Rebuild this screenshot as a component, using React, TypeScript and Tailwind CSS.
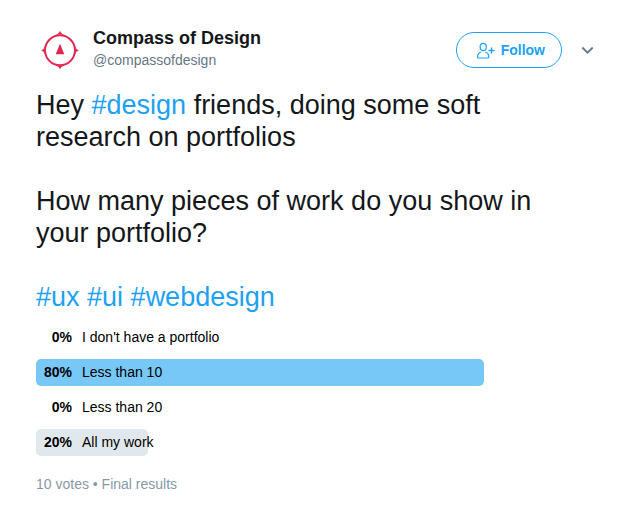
import { ReactNode } from "react";

type Option = {
  label: string;
  percent: number;
  winner?: boolean;
};

const options: Option[] = [
  { label: "I don't have a portfolio", percent: 0 },
  { label: "Less than 10", percent: 80, winner: true },
  { label: "Less than 20", percent: 0 },
  { label: "All my work", percent: 20 }
];

function Hashtag({ children }: { children: ReactNode }) {
  return (
    <a href="#" className="text-[#1da1f2]">
      {children}
    </a>
  );
}

function Avatar() {
  return (
    <svg viewBox="0 0 48 48" className="size-12 shrink-0" aria-hidden="true">
      <circle cx="24" cy="24.3" r="15" fill="none" stroke="#e2264d" strokeWidth="2" />
      <g fill="#e2264d">
        <path d="M24 4.600 Q24.800 8.200 30 9.800 A15 15 0 0 0 18 9.800 Q23.200 8.200 24 4.600Z" />
        <path d="M24 43.300 Q24.800 40.600 28 39.400 A15 15 0 0 1 20 39.400 Q23.200 40.600 24 43.300Z" />
        <path d="M5.300 24.300 Q8 23.500 9 20.300 A15 15 0 0 0 9 28.300 Q8 25.100 5.300 24.300Z" />
        <path d="M42.700 24.300 Q40 23.500 39 20.300 A15 15 0 0 1 39 28.300 Q40 25.100 42.700 24.300Z" />
        <path d="M24 17.800 L28.300 28.200 L19.700 28.200Z" />
      </g>
    </svg>
  );
}

function FollowIcon() {
  return (
    <svg
      viewBox="0 0 19 18"
      className="h-[18px] w-[19px]"
      fill="none"
      stroke="currentColor"
      strokeWidth="1.2"
      aria-hidden="true"
    >
      <path d="M6.200 2.300c-2.100 0-3.100 1.300-3.100 3.200 0 2.300 1.100 4.100 3.100 4.100s3.100-1.800 3.100-4.100c0-1.900-1-3.200-3.100-3.200Z" />
      <path d="M4.200 11C1.700 11.500.600 13.300.600 16.100c0 .6.300.9.900.9h9.400c.6 0 .9-.3.900-.9 0-2.800-1.100-4.600-3.600-5.100" />
      <path d="M14.500 6.500v6M11.500 9.500h6" strokeWidth="1.400" />
    </svg>
  );
}

function PollRow({ option }: { option: Option }) {
  return (
    <li className="relative flex h-[27px] items-center pb-[2px] text-sm text-black">
      <span
        className={`absolute inset-y-0 left-0 rounded-[5px] ${
          option.winner ? "bg-[#77c7f7]" : "bg-[#e1e8ed]"
        }`}
        style={{ width: `${option.percent}%` }}
      />
      <b className="relative w-9 text-right">{option.percent}%</b>
      <span className="relative ml-[10px]">{option.label}</span>
    </li>
  );
}

export default function App() {
  return (
    <main className="min-h-screen bg-white px-9 pt-[26px] pb-4 font-['Liberation_Sans',Arial,sans-serif]">
      <article>
        <header className="flex items-start justify-between">
          <a href="#" className="flex items-center gap-[9px]">
            <Avatar />
            <span className="flex flex-col pb-1">
              <b className="text-lg leading-6 text-[#14171a]">Compass of Design</b>
              <span className="text-sm text-[#657786]">@compassofdesign</span>
            </span>
          </a>
          <div className="flex items-center gap-[19px] pt-[6px] pr-[3px]">
            <button
              type="button"
              className="flex h-9 items-center gap-[5px] rounded-full border border-[#1da1f2] pr-4 pl-5 text-sm font-bold text-[#1da1f2]"
            >
              <FollowIcon />
              Follow
            </button>
            <button type="button" aria-label="More" className="text-[#657786]">
              <svg
                viewBox="0 0 13 8"
                className="h-2 w-[13px]"
                fill="none"
                stroke="currentColor"
                strokeWidth="1.8"
                aria-hidden="true"
              >
                <path d="M1.300 1.500 6.500 6.700 11.700 1.500" />
              </svg>
            </button>
          </div>
        </header>
        <section className="mt-[15px] flex flex-col gap-8 pr-4 text-[27px] leading-8 text-[#14171a]">
          <p>
            Hey <Hashtag>#design</Hashtag> friends, doing some soft research on portfolios
          </p>
          <p>How many pieces of work do you show in your portfolio?</p>
          <p>
            <Hashtag>#ux</Hashtag> <Hashtag>#ui</Hashtag> <Hashtag>#webdesign</Hashtag>
          </p>
        </section>
        <ul className="mt-[11px] mr-px flex flex-col gap-2">
          {options.map((option) => (
            <PollRow key={option.label} option={option} />
          ))}
        </ul>
        <footer className="mt-[18px] text-sm text-[#8899a6]">10 votes • Final results</footer>
      </article>
    </main>
  );
}
